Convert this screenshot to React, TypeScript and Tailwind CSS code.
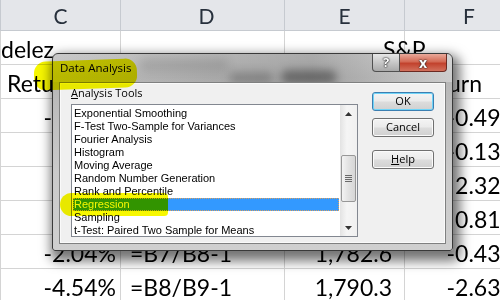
import { Fragment } from "react";

type Row = {
  c?: string;
  cLeft?: boolean;
  cPad?: string;
  d?: string;
  e?: string;
  ePad?: string;
  eLeft?: boolean;
  f?: string;
};

const rows: Row[] = [
  { c: "delez", cLeft: true, cPad: "pl-0", e: "S&P", eLeft: true, ePad: "pl-[98px]" },
  { c: "Return", cLeft: true, cPad: "pl-[6px]", f: "Return" },
  { c: "-1.59%", d: "=B3/B4-1", e: "1,815.7", f: "-0.49%" },
  { c: "0.72%", d: "=B4/B5-1", e: "1,824.6", f: "-0.13%" },
  { c: "3.11%", d: "=B5/B6-1", e: "1,827.0", f: "2.32%" },
  { c: "1.05%", d: "=B6/B7-1", e: "1,785.6", f: "0.81%" },
  { c: "-2.04%", d: "=B7/B8-1", e: "1,782.6", f: "-0.43%" },
  { c: "-4.54%", d: "=B8/B9-1", e: "1,790.3", f: "-2.63%" },
];

const tools = [
  "Exponential Smoothing",
  "F-Test Two-Sample for Variances",
  "Fourier Analysis",
  "Histogram",
  "Moving Average",
  "Random Number Generation",
  "Rank and Percentile",
  "Regression",
  "Sampling",
  "t-Test: Paired Two Sample for Means",
];

const cell = "h-[34px] shrink-0 border-b border-r border-[#d4d4d4] flex items-end pb-[1px] leading-[28px] whitespace-nowrap overflow-visible";

function DlgButton({ children, focused }: { children: React.ReactNode; focused?: boolean }) {
  return (
    <div
      className={
        "h-[19px] w-[62px] rounded-[3px] border flex items-center justify-center text-[11px] text-black bg-[linear-gradient(180deg,#f4f4f4_0%,#ebebeb_45%,#dcdcdc_55%,#d0d0d0_100%)] " +
        (focused ? "border-[#3c7fb1] shadow-[inset_0_0_0_1px_#6fd4f8]" : "border-[#707070] shadow-[inset_0_0_0_1px_#fbfbfb]")
      }
    >
      {children}
    </div>
  );
}

export default function App() {
  return (
    <div className="relative w-[500px] h-[300px] overflow-hidden bg-white font-['Lato',sans-serif] text-black">
      {/* column headers */}
      <div className="flex h-[31px] bg-[#e4e6ea] border-b border-[#c6cad0] text-[21px] text-[#27303c]">
        <div className="w-[1px] h-full bg-[#c6cad0] shrink-0" />
        <div className="w-[120px] shrink-0 border-r border-[#c6cad0] flex items-center justify-center pt-[1px]">C</div>
        <div className="w-[164px] shrink-0 border-r border-[#c6cad0] flex items-center justify-center pt-[1px] pl-[8px]">D</div>
        <div className="w-[120px] shrink-0 border-r border-[#c6cad0] flex items-center justify-center pt-[1px]">E</div>
        <div className="w-[120px] shrink-0 border-r border-[#c6cad0] flex items-center justify-start pl-[58px] pt-[1px]">F</div>
      </div>

      {/* cells */}
      <div className="flex flex-col text-[23px]">
        {rows.map((r, i) => (
          <div key={i} className="flex">
            <div className={cell + " w-[1px] border-r-0 bg-[#d4d4d4]"} />
            <div className={cell + " w-[120px] " + (r.cLeft ? "justify-start " + r.cPad : "justify-end pr-[4px]")}>{r.c}</div>
            <div className={cell + " w-[164px] justify-start pl-[9px]"}>{r.d}</div>
            <div className={cell + " w-[120px] " + (r.eLeft ? "justify-start " + r.ePad : "justify-end pr-[12px]")}>{r.e}</div>
            <div className={cell + " w-[120px] justify-end " + (r.f === "Return" ? "pr-[42px]" : "pr-[5px]")}>{r.f}</div>
          </div>
        ))}
      </div>

      {/* dialog */}
      <div className="absolute left-[52px] top-[53px] w-[401px] h-[198px] rounded-t-[6px] rounded-b-[3px] border border-[#3a3a3a] bg-[linear-gradient(180deg,#c2c2c2_0%,#b6b6b6_12%,#cacaca_60%,#cfcfcf_100%)] shadow-[3px_6px_12px_4px_rgba(0,0,0,0.55)] flex flex-col font-['Open_Sans',sans-serif]">
        <div className="relative h-[28px] shrink-0 flex items-center pl-[7px] text-[11.5px] text-black rounded-t-[5px] overflow-hidden bg-[linear-gradient(90deg,rgba(255,255,255,0.12)_0%,rgba(0,0,0,0.08)_45%,rgba(0,0,0,0.12)_65%,rgba(255,255,255,0.3)_100%)]">
          <div className="absolute left-[228px] top-[16px] w-[56px] h-[14px] rounded-full bg-black/35 blur-[4px]" />
          <div className="absolute left-[176px] top-[18px] w-[44px] h-[12px] rounded-full bg-black/20 blur-[4px]" />
          <div className="absolute left-[86px] top-[4px] w-[90px] h-[14px] rounded-full bg-black/10 blur-[5px]" />
          <span className="relative">Data Analysis</span>
          <div className="absolute top-0 right-[5px] flex h-[18px]">
            <div className="w-[28px] h-full rounded-bl-[4px] border border-t-0 border-[#505050] bg-[linear-gradient(180deg,#e6e6e6_0%,#c8c8c8_50%,#a9a9a9_100%)] flex items-center justify-center text-[13px] font-bold text-white [text-shadow:0_0_1px_#000,0_0_2px_#000]">
              ?
            </div>
            <div className="w-[47px] h-full rounded-br-[4px] border border-t-0 border-l-0 border-[#6b2a22] bg-[linear-gradient(180deg,#e9a99a_0%,#d36a55_45%,#c2422d_55%,#d2705c_100%)] flex items-center justify-center text-[14px] font-bold text-white [text-shadow:0_0_1px_#000,0_0_2px_#222]">
              x
            </div>
          </div>
        </div>

        <div className="mx-[6px] mb-[6px] flex-1 border border-[#7f8080] bg-[#f0f0f0] shadow-[inset_0_0_0_1px_#fafafa] flex">
          <div className="pl-[11px] flex flex-col">
            <div className="mt-[3px] h-[14px] leading-[14px] text-[11px]">
              <span className="underline underline-offset-[1px]">A</span>nalysis Tools
            </div>
            <div className="mt-[4px] w-[287px] h-[133px] border border-[#828790] bg-white flex font-['Liberation_Sans',sans-serif] text-[11px]">
              <div className="flex-1 px-[1px] pt-[2px] flex flex-col">
                {tools.map((t) => (
                  <Fragment key={t}>
                    {t === "Regression" ? (
                      <div className="h-[13px] leading-[11px] bg-[#3399ff] text-white border border-dotted border-[#d9a060] whitespace-nowrap">{t}</div>
                    ) : (
                      <div className="h-[13px] leading-[13px] pl-[1px] whitespace-nowrap">{t}</div>
                    )}
                  </Fragment>
                ))}
              </div>
              <div className="w-[17px] shrink-0 flex flex-col bg-[linear-gradient(90deg,#e3e3e3,#f5f5f5_40%,#f0f0f0)]">
                <div className="h-[17px] flex items-center justify-center">
                  <svg width="7" height="4" viewBox="0 0 7 4"><path d="M0 4 L3.5 0 L7 4 Z" fill="#333" /></svg>
                </div>
                <div className="flex-1 relative">
                  <div className="absolute left-[1px] right-[1px] top-[33px] h-[47px] rounded-[2px] border border-[#979797] bg-[linear-gradient(90deg,#f3f3f3,#e2e2e2_50%,#d6d6d6)] flex flex-col items-center justify-center gap-[1px]">
                    <div className="w-[7px] h-[1px] bg-[#6a6a6a]" />
                    <div className="w-[7px] h-[1px] bg-[#6a6a6a]" />
                    <div className="w-[7px] h-[1px] bg-[#6a6a6a]" />
                    <div className="w-[7px] h-[1px] bg-[#6a6a6a]" />
                  </div>
                </div>
                <div className="h-[17px] flex items-center justify-center">
                  <svg width="7" height="4" viewBox="0 0 7 4"><path d="M0 0 L3.5 4 L7 0 Z" fill="#333" /></svg>
                </div>
              </div>
            </div>
          </div>
          <div className="ml-[14px] pt-[9px] flex flex-col">
            <DlgButton focused>OK</DlgButton>
            <div className="h-[7px]" />
            <DlgButton>Cancel</DlgButton>
            <div className="h-[13px]" />
            <DlgButton>
              <span className="underline underline-offset-[1px]">H</span>elp
            </DlgButton>
          </div>
        </div>
      </div>

      {/* highlighter marks */}
      <div className="pointer-events-none absolute left-[34px] top-[60px] w-[103px] h-[29px] rounded-[12px] rotate-[-2deg] bg-[#f7f700] mix-blend-multiply" />
      <div className="pointer-events-none absolute left-[60px] top-[193px] w-[108px] h-[23px] rounded-l-[12px] rounded-r-[4px] bg-[#f7f700] mix-blend-multiply" />
    </div>
  );
}
